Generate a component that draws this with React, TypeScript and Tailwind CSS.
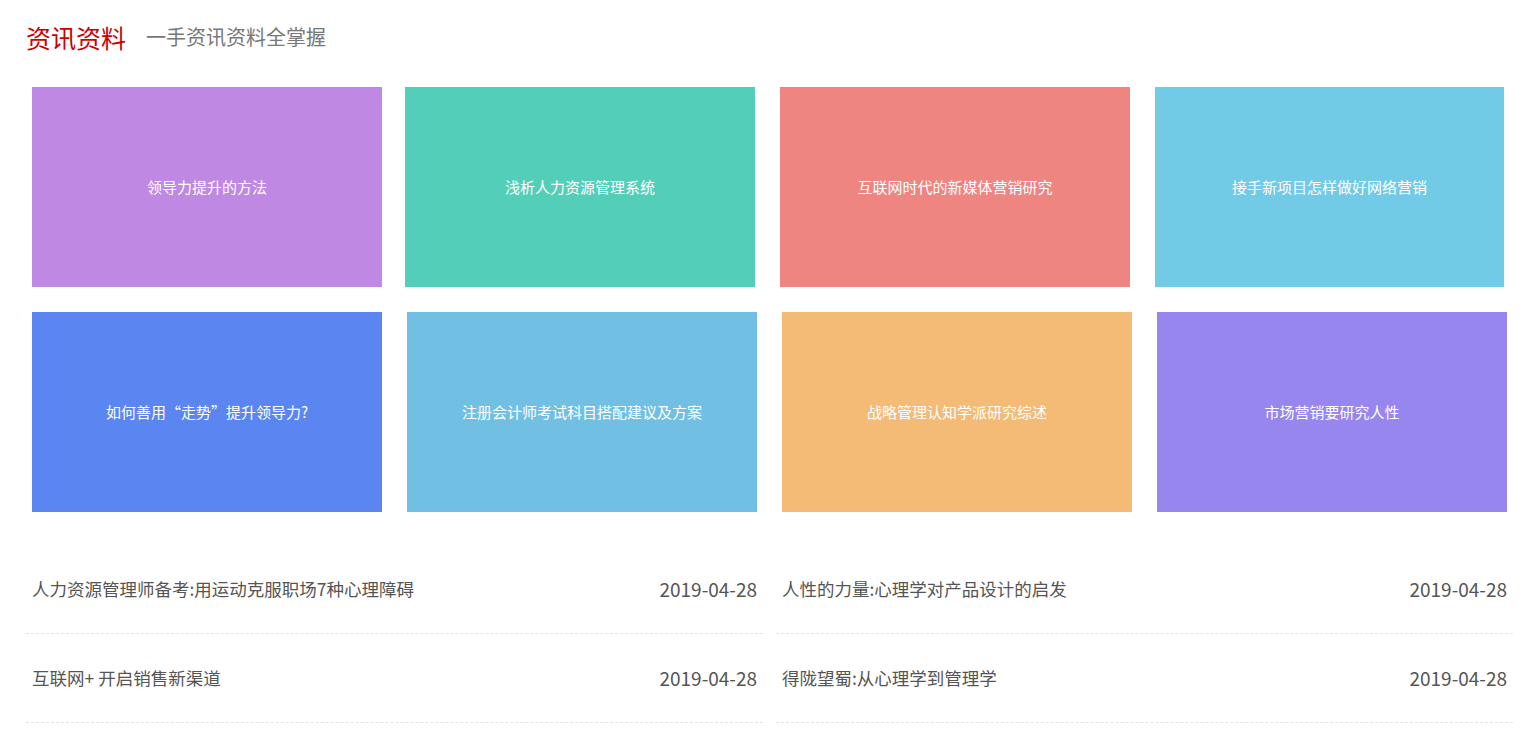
import React from "react";

const font = { fontFamily: '"Noto Sans CJK SC", "Noto Sans", sans-serif' };

export default function App() {
  const news = [
    ["人力资源管理师备考:用运动克服职场7种心理障碍", "人性的力量:心理学对产品设计的启发"],
    ["互联网+ 开启销售新渠道", "得陇望蜀:从心理学到管理学"],
  ];
  return (
    <div className="w-[1526px] h-[736px] bg-white overflow-hidden" style={font}>
      <div className="pl-[26px] h-[74px] flex items-center">
        <span className="text-[25px] leading-none text-[#cc0000]">资讯资料</span>
        <span className="ml-[20px] text-[20px] leading-none text-[#777777]">一手资讯资料全掌握</span>
      </div>
      <div className="mt-[13px] pl-[32px] flex">
        <div className="w-[350px] h-[200px] bg-[#bf88e2] flex items-center justify-center text-white text-[15px]">领导力提升的方法</div>
        <div className="ml-[23px] w-[350px] h-[200px] bg-[#53cfb9] flex items-center justify-center text-white text-[15px]">浅析人力资源管理系统</div>
        <div className="ml-[25px] w-[350px] h-[200px] bg-[#ee8581] flex items-center justify-center text-white text-[15px]">互联网时代的新媒体营销研究</div>
        <div className="ml-[25px] w-[349px] h-[200px] bg-[#71cbe6] flex items-center justify-center text-white text-[15px]">接手新项目怎样做好网络营销</div>
      </div>
      <div className="mt-[25px] pl-[32px] flex">
        <div className="w-[350px] h-[200px] bg-[#5b85f0] flex items-center justify-center text-white text-[15px]">如何善用“走势”提升领导力?</div>
        <div className="ml-[25px] w-[350px] h-[200px] bg-[#71bfe3] flex items-center justify-center text-white text-[15px]">注册会计师考试科目搭配建议及方案</div>
        <div className="ml-[25px] w-[350px] h-[200px] bg-[#f3bb76] flex items-center justify-center text-white text-[15px]">战略管理认知学派研究综述</div>
        <div className="ml-[25px] w-[350px] h-[200px] bg-[#9786ee] flex items-center justify-center text-white text-[15px]">市场营销要研究人性</div>
      </div>
      <div className="mt-[33px] pl-[26px] flex flex-col">
        {news.map((row, i) => (
          <div key={i} className="flex gap-[13px]">
            {row.map((t, j) => (
              <div key={j} className="w-[737px] h-[89px] border-b border-dashed border-[#e5e5e5] flex items-center justify-between px-[6px] text-[#555555]">
                <span className="text-[17.5px]">{t}</span>
                <span className="text-[19px]">2019-04-28</span>
              </div>
            ))}
          </div>
        ))}
      </div>
    </div>
  );
}
